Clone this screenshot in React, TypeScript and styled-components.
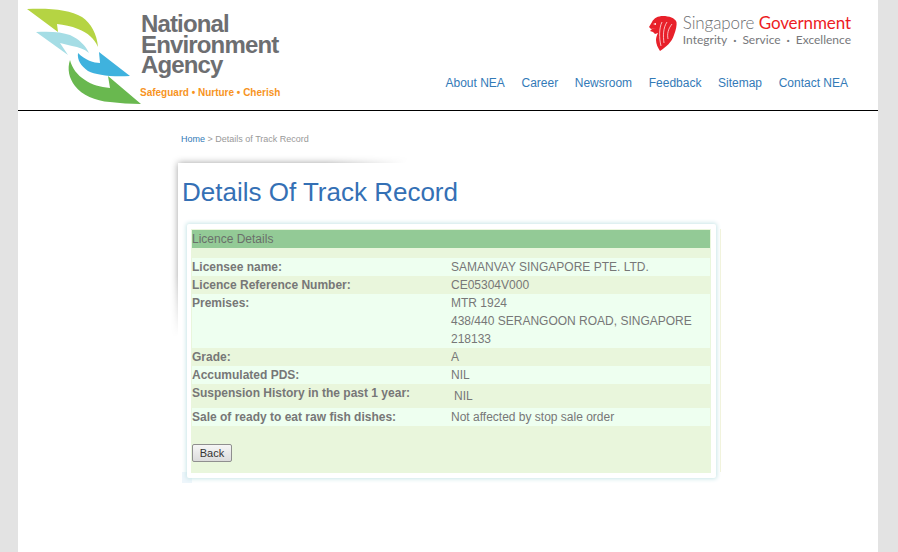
import styled, { createGlobalStyle } from "styled-components";

const GlobalStyle = createGlobalStyle`
  html, body {
    margin: 0;
    padding: 0;
    background: #e3e3e3;
    font-family: "Liberation Sans", Arial, sans-serif;
  }
`;

const details = [
  { label: "Licensee name:", value: ["SAMANVAY SINGAPORE PTE. LTD."], tone: "light" },
  { label: "Licence Reference Number:", value: ["CE05304V000"], tone: "dark" },
  { label: "Premises:", value: ["MTR 1924", "438/440 SERANGOON ROAD, SINGAPORE", "218133"], tone: "light" },
  { label: "Grade:", value: ["A"], tone: "dark" },
  { label: "Accumulated PDS:", value: ["NIL"], tone: "light" },
];

export default function App() {
  return (
    <>
      <GlobalStyle />
      <Page>
        <Header>
          <Logo>
            <LogoMark width="116" height="100" viewBox="26 6 116 100">
              <path fill="#b5d443" d="M27 9 C52 8 70 10 82 17 C91 23 97 34 98 47 C94 38 88 33 78 29 C71 26 64 25 57 24 L58 32 Z" />
              <path fill="#a5dde5" d="M36 32 C50 31 62 32 70 35 C79 39 86 46 89 53 C84 49 79 47 72 46 C68 45 64 44 60 43 L68 55 Z" />
              <path fill="#3fb2de" d="M130 76 L99 52 L100 63 C94 63 85 60 78 53 C77 60 81 66 88 71 C96 75 110 77 130 76 Z" />
              <path fill="#69b84f" d="M141 104 L108 76 L110 88 C100 87 92 85 85 80 C77 75 72 68 70 60 C67 69 69 78 75 86 C82 95 95 101 110 102 C120 103 130 104 141 104 Z" />
            </LogoMark>
            <LogoText>
              <LogoName>National<br />Environment<br />Agency</LogoName>
              <LogoTagline>Safeguard • Nurture • Cherish</LogoTagline>
            </LogoText>
          </Logo>
          <HeaderRight>
            <GovBrand>
              <LionMark width="28" height="35" viewBox="0 0 28 35">
                <path fill="#e8202a" d="M0 11 L3 6 C5 2 9 0 14 0 C20 0 26 2 27.5 6 C28 9 27 14 25 19 C23 26 17 31 11 35 C9 32 7 28 7 24 C7 21 8 19 9 17 L6 18 L4 16 L1 15 L3 13 L7 12 L2 13 Z" />
                <path fill="none" stroke="#fff" strokeWidth="0.7" d="M13 6 C10 12 10 22 12 30 M18 6 C14 12 14 20 15 27 M23 8 C19 13 18 18 19 23" />
                <path fill="#fff" d="M4 8 L7 7 L7 9 Z" />
              </LionMark>
              <GovText>
                <GovTitle>Singapore <GovAccent>Government</GovAccent></GovTitle>
                <GovMotto>Integrity <MottoDot>·</MottoDot> Service <MottoDot>·</MottoDot> Excellence</GovMotto>
              </GovText>
            </GovBrand>
            <Nav>
              <NavLink href="#">About NEA</NavLink>
              <NavLink href="#">Career</NavLink>
              <NavLink href="#">Newsroom</NavLink>
              <NavLink href="#">Feedback</NavLink>
              <NavLink href="#">Sitemap</NavLink>
              <NavLink href="#">Contact NEA</NavLink>
            </Nav>
          </HeaderRight>
        </Header>
        <Main>
          <Breadcrumb>
            <CrumbLink href="#">Home</CrumbLink> &gt; Details of Track Record
          </Breadcrumb>
          <Panel>
            <PanelShade />
            <Title>Details Of Track Record</Title>
            <Card>
              <CardInner>
                <SectionBar>Licence Details</SectionBar>
                <Spacer />
                {details.map((row) => (
                  <Row key={row.label} $tone={row.tone}>
                    <Label>{row.label}</Label>
                    <Value>
                      {row.value.map((line) => (
                        <div key={line}>{line}</div>
                      ))}
                    </Value>
                  </Row>
                ))}
                <SuspensionRow $tone="dark">
                  <Label>Suspension History in the past 1 year:</Label>
                  <IndentedValue>NIL</IndentedValue>
                </SuspensionRow>
                <Row $tone="light">
                  <Label>Sale of ready to eat raw fish dishes:</Label>
                  <Value>Not affected by stop sale order</Value>
                </Row>
                <Actions>
                  <BackButton type="button">Back</BackButton>
                </Actions>
              </CardInner>
            </Card>
          </Panel>
        </Main>
      </Page>
    </>
  );
}

const Page = styled.div`
  width: 860px;
  min-height: 552px;
  margin-left: 18px;
  background: #fff;
`;

const Header = styled.header`
  height: 111px;
  box-sizing: border-box;
  border-bottom: 1px solid #000;
  display: flex;
  justify-content: space-between;
  padding: 0 30px 0 8px;
`;

const Logo = styled.div`
  display: flex;
  align-items: flex-start;
`;

const LogoMark = styled.svg`
  display: block;
  margin-top: 6px;
`;

const LogoText = styled.div`
  display: flex;
  flex-direction: column;
  margin-top: 14px;
`;

const LogoName = styled.div`
  font-size: 24px;
  line-height: 20.6px;
  font-weight: 700;
  letter-spacing: -0.85px;
  color: #6d6e71;
  margin-left: -1px;
`;

const LogoTagline = styled.div`
  margin-top: 11px;
  margin-left: -2px;
  font-size: 10px;
  line-height: 12px;
  font-weight: 700;
  color: #f7941e;
  white-space: nowrap;
`;

const HeaderRight = styled.div`
  display: flex;
  flex-direction: column;
  align-items: flex-end;
`;

const GovBrand = styled.div`
  display: flex;
  align-items: flex-start;
  gap: 6px;
  margin-top: 16px;
  margin-right: -3px;
`;

const LionMark = styled.svg`
  display: block;
`;

const GovText = styled.div`
  display: flex;
  flex-direction: column;
  margin-top: -3px;
`;

const GovTitle = styled.div`
  font-family: Lato, sans-serif;
  font-size: 17px;
  line-height: 20px;
  font-weight: 300;
  letter-spacing: -0.1px;
  color: #6d6e71;
  white-space: nowrap;
`;

const GovAccent = styled.span`
  color: #ed1c24;
  font-weight: 400;
`;

const GovMotto = styled.div`
  display: flex;
  justify-content: space-between;
  font-family: Lato, sans-serif;
  font-size: 12px;
  line-height: 14px;
  color: #77787b;
  white-space: nowrap;
`;

const MottoDot = styled.span`
  font-weight: 700;
`;

const Nav = styled.nav`
  display: flex;
  gap: 16.6px;
  margin-top: 25px;
`;

const NavLink = styled.a`
  font-size: 12px;
  line-height: 14px;
  color: #337ab7;
  text-decoration: none;
  white-space: nowrap;
`;

const Main = styled.main`
  padding: 23px 0 0 160px;
`;

const Breadcrumb = styled.div`
  padding-left: 3px;
  font-size: 9px;
  line-height: 11px;
  color: #999;
`;

const CrumbLink = styled.a`
  color: #337ab7;
  text-decoration: none;
`;

const Panel = styled.section`
  position: relative;
  isolation: isolate;
  margin-top: 18px;
  width: 540px;
  padding: 14px 0 0 4px;
`;

const PanelShade = styled.div`
  position: absolute;
  left: -10px;
  top: -10px;
  width: 250px;
  height: 190px;
  overflow: hidden;
  -webkit-mask-image: linear-gradient(to bottom right, #000 34%, transparent 50%);
  mask-image: linear-gradient(to bottom right, #000 34%, transparent 50%);
  pointer-events: none;
  &::before {
    content: "";
    position: absolute;
    left: 10px;
    top: 10px;
    width: 500px;
    height: 500px;
    box-shadow: 0 0 7px rgba(0, 0, 0, 0.38);
  }
`;

const Title = styled.h1`
  margin: 0;
  font-size: 26px;
  line-height: 30px;
  font-weight: 400;
  color: #3470b5;
`;

const Card = styled.div`
  position: relative;
  margin: 17px 0 0 5px;
  width: 529px;
  height: 254px;
  box-sizing: border-box;
  padding: 5px 5px 5px 4px;
  background: #fff;
  border-radius: 2px;
  box-shadow: 0 0 4px 1px #c9e6e8;
  &::before {
    content: "";
    position: absolute;
    z-index: -1;
    left: -5px;
    bottom: -5px;
    width: 10px;
    height: 11px;
    background: #eef6fb;
  }
  &::after {
    content: "";
    position: absolute;
    right: -5px;
    top: 5px;
    bottom: 6px;
    width: 1px;
    background: #f1f3dc;
  }
`;

const CardInner = styled.div`
  height: 100%;
  box-sizing: border-box;
  padding: 1px;
  background: #e9f6dc;
  display: flex;
  flex-direction: column;
`;

const SectionBar = styled.div`
  height: 18px;
  font-size: 12px;
  line-height: 18px;
  color: #6a6f6a;
  background: #93ca96;
`;

const Spacer = styled.div`
  height: 10px;
`;

const Row = styled.div<{ $tone: string }>`
  display: grid;
  grid-template-columns: 259px 1fr;
  font-size: 12px;
  line-height: 18px;
  background: ${(p) => (p.$tone === "light" ? "#eefff0" : "#e9f6dc")};
`;

const SuspensionRow = styled(Row)`
  height: 24px;
`;

const Label = styled.div`
  font-weight: 700;
  color: #777;
`;

const Value = styled.div`
  color: #777;
`;

const IndentedValue = styled(Value)`
  padding: 3px 0 0 3px;
`;

const Actions = styled.div`
  padding-top: 18px;
`;

const BackButton = styled.button`
  display: block;
  width: 40px;
  height: 18px;
  padding: 0;
  font-family: "Liberation Sans", Arial, sans-serif;
  font-size: 11px;
  color: #333;
  background: linear-gradient(#f6f6f6, #dcdcdc);
  border: 1px solid #8f8f8f;
  border-radius: 2px;
`;
